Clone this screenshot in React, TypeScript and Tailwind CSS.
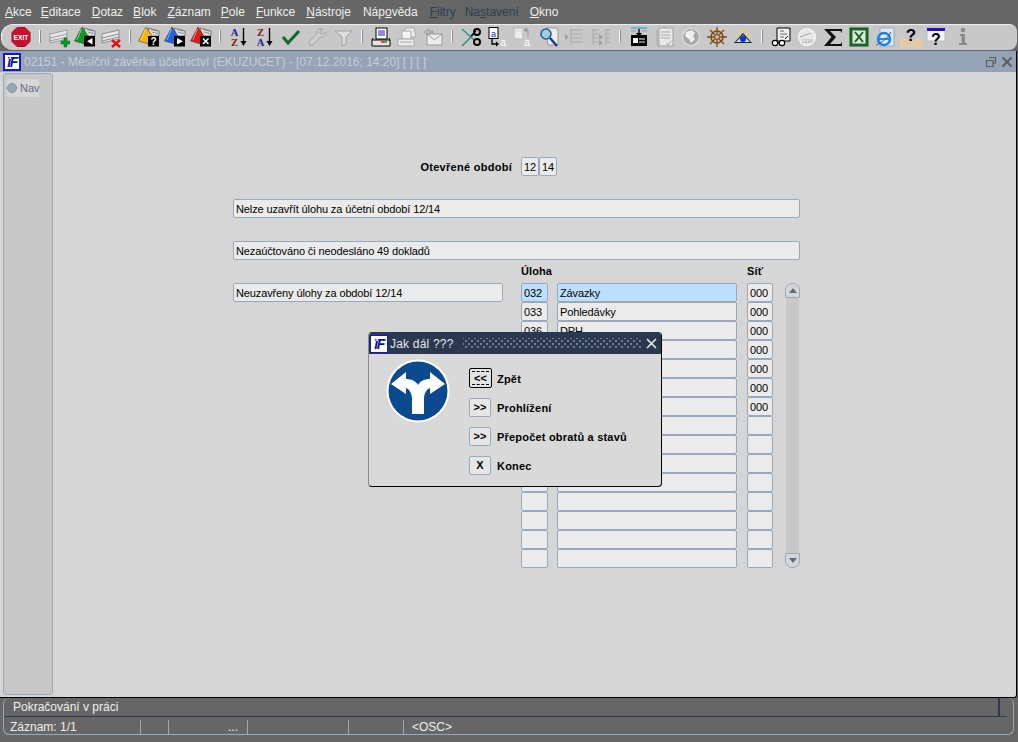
import React from "react";

const S = ({ children }: { children: React.ReactNode }) => (
  <svg width="22" height="22" viewBox="0 0 22 22" shapeRendering="geometricPrecision">{children}</svg>
);
const Stripes = ({ x = 2, y = 4, c = "#9a9a9a" }: { x?: number; y?: number; c?: string }) => (
  <g>
    <path d={`M${x} ${y + 4}L${x + 17} ${y}V${y + 9}L${x} ${y + 13}Z`} fill="#e8e8e8" stroke={c} />
    <path d={`M${x} ${y + 8}L${x + 17} ${y + 4}`} stroke={c} />
    <path d={`M${x} ${y + 11}L${x + 17} ${y + 7}`} stroke={c} />
  </g>
);
const Tag = ({ color, box }: { color: string; box: React.ReactNode }) => (
  <S>
    <path d="M10 2L21 5V10H12Z" fill="#dcdcdc" stroke="#555" strokeWidth="0.7" />
    <path d="M13 3.5L19 5M13.5 6L20 7.5" stroke="#777" strokeWidth="0.7" />
    <path d="M8 1L14 10V19L0.5 15Z" fill={color} stroke="#333" strokeWidth="0.5" />
    <path d="M7.5 3L3 14" stroke="#fff" strokeOpacity="0.5" />
    <rect x="10" y="10" width="11" height="10.5" fill="#000" />
    {box}
  </S>
);
const grey = "#a8a8a8";

const icons: React.ReactNode[] = [
  <S key="exit">
    <path d="M7 1.5H15L20 6.5V15.500L15 20.500H7L2 15.500V6.500Z" fill="#c8102e" stroke="#a00c22" />
    <text x="11" y="13.600" fontSize="7.200" fontWeight="700" fill="#fff" textAnchor="middle" fontFamily="Liberation Sans" textLength="15" lengthAdjust="spacingAndGlyphs">EXIT</text>
  </S>,
  "|",
  <S key="add">
    <Stripes />
    <path d="M13 15H16V12H19V15H22V18H19V21H16V18H13Z" fill="#0a9a1e" stroke="#064" strokeWidth="0.5" />
  </S>,
  <Tag key="g" color="#0a9a28" box={<path d="M18.500 12V18.500L13 15.200Z" fill="#fff" />} />,
  <S key="del">
    <Stripes c="#8a8a8a" />
    <path d="M12 14L20 21M20 14L12 21" stroke="#e01010" strokeWidth="2.4" />
  </S>,
  "|",
  <Tag key="y" color="#f5b400" box={<text x="15.500" y="19" fontSize="10" fontWeight="700" fill="#fff" textAnchor="middle" fontFamily="Liberation Sans">?</text>} />,
  <Tag key="b" color="#1a66e0" box={<path d="M13 12L19 15.200L13 18.500Z" fill="#fff" />} />,
  <Tag key="r" color="#e01818" box={<path d="M13 12.500L18.500 18M18.500 12.500L13 18" stroke="#fff" strokeWidth="1.6" />} />,
  "|",
  <S key="az">
    <text x="6.500" y="10" fontSize="10.500" fontWeight="700" fill="#1a1a8c" textAnchor="middle" fontFamily="Liberation Serif">A</text>
    <text x="6.500" y="20" fontSize="10.500" fontWeight="700" fill="#7a1a1a" textAnchor="middle" fontFamily="Liberation Serif">Z</text>
    <path d="M15.500 2V17" stroke="#000" strokeWidth="1.400" />
    <path d="M12.500 15H18.500L15.500 20Z" fill="#000" />
  </S>,
  <S key="za">
    <text x="6.500" y="10" fontSize="10.500" fontWeight="700" fill="#7a1a1a" textAnchor="middle" fontFamily="Liberation Serif">Z</text>
    <text x="6.500" y="20" fontSize="10.500" fontWeight="700" fill="#1a1a8c" textAnchor="middle" fontFamily="Liberation Serif">A</text>
    <path d="M15.500 2V17" stroke="#000" strokeWidth="1.400" />
    <path d="M12.500 15H18.500L15.500 20Z" fill="#000" />
  </S>,
  <S key="check">
    <path d="M3 11L8 17L19 5" fill="none" stroke="#0a6b2a" strokeWidth="3" />
  </S>,
  <S key="wrench">
    <path d="M14 3C12 3 10.500 5 11 7.500L3 15.500L3.500 19L7 19L14.500 11C17 12 20 10 20 7.500L19.500 6L16.500 8.500L14 7.500L13.800 5.500L16.500 3.300Z" fill="#cfcfcf" stroke="#a0a0a0" />
  </S>,
  <S key="funnel">
    <path d="M3 5H20L14 11V18L10 20V11Z" fill="#dedede" stroke="#a0a0a0" />
  </S>,
  "|",
  <S key="print">
    <rect x="6" y="2" width="11" height="11" fill="#fff" stroke="#000" />
    <path d="M8 5H15M8 7H15M8 9H15" stroke="#2020c0" />
    <path d="M2 14H20V20H2Z" fill="#e6e6e6" stroke="#000" />
    <path d="M11 16H14" stroke="#e02020" strokeWidth="1.600" />
    <path d="M14 16H17" stroke="#10a030" strokeWidth="1.600" />
    <path d="M3 12L2 14M19 12L20 14" stroke="#000" />
  </S>,
  <S key="print2">
    <path d="M9 2H18L20 11H9Z" fill="#ececec" stroke={grey} />
    <path d="M6 5H15V13H6Z" fill="#f4f4f4" stroke={grey} />
    <path d="M2 13H18V20H2Z" fill="#ececec" stroke={grey} />
    <path d="M4 16H16" stroke={grey} />
  </S>,
  <S key="mail">
    <path d="M5 8H20V19H5Z" fill="#ececec" stroke="#999" />
    <path d="M5 8L12.500 14L20 8" fill="none" stroke="#999" />
    <path d="M2 6L7 3V5H11V7H7V9Z" fill="#bbb" stroke="#888" strokeWidth="0.600" />
  </S>,
  "|",
  <S key="cut">
    <path d="M2 3L14 14M2 20L14 8" stroke="#3b8f8f" strokeWidth="1.600" />
    <path d="M11 10L16 5" stroke="#000" strokeWidth="1.400" />
    <circle cx="17" cy="6" r="3" fill="none" stroke="#000" strokeWidth="2" />
    <circle cx="17" cy="16" r="3" fill="none" stroke="#000" strokeWidth="2" />
  </S>,
  <S key="copy">
    <rect x="3" y="1.500" width="9" height="11" fill="#fff" stroke="#000" />
    <text x="7.500" y="10.500" fontSize="9" fill="#1a1ad0" textAnchor="middle" fontFamily="Liberation Sans">a</text>
    <path d="M6 13V18H11" fill="none" stroke="#000" strokeWidth="1.300" />
    <path d="M10 15.500L13 18L10 20.500Z" fill="#000" />
    <text x="17" y="20" fontSize="10" fill="#fff" textAnchor="middle" fontFamily="Liberation Sans">a</text>
  </S>,
  <S key="paste">
    <rect x="2" y="2" width="9" height="11" fill="#e4e4e4" stroke="#bbb" />
    <text x="6.500" y="10.500" fontSize="9" fill="#fff" textAnchor="middle" fontFamily="Liberation Sans">a</text>
    <path d="M16 4V11M12 4L15 2V6Z" stroke="#999" fill="#999" />
    <text x="15" y="20" fontSize="10" fill="#fff" textAnchor="middle" fontFamily="Liberation Sans">a</text>
  </S>,
  <S key="search">
    <path d="M8 2H18L20 4V19H10Z" fill="#eee" stroke="#999" />
    <circle cx="8" cy="8" r="5" fill="#9fd0e0" stroke="#2a5aa0" strokeWidth="1.600" />
    <path d="M12 12L19 20" stroke="#1a3a90" strokeWidth="2.600" />
  </S>,
  <S key="ind">
    <path d="M1 8L5 11L1 14Z" fill="#a0a0a0" />
    <path d="M7 3V19M7 4H19M7 8H19M7 12H19M7 16H19" stroke="#a8a8a8" />
  </S>,
  <S key="cols">
    <path d="M3 3V19M16 3V19M3 4H8M3 8H8M3 12H8M3 16H8M16 4H20M16 8H20M16 12H20M16 16H20" stroke="#a8a8a8" />
    <path d="M9 8L13 11L9 14Z" fill="#a0a0a0" />
    <path d="M9 14L13 17L9 20Z" fill="#a0a0a0" />
  </S>,
  "|",
  <S key="doc">
    <rect x="3" y="9" width="16" height="11" fill="#000" />
    <rect x="5" y="12" width="5" height="5" fill="#fff" />
    <path d="M11 13H17M11 16H17" stroke="#fff" />
    <path d="M3 2H19" stroke="#35b0e0" strokeWidth="1.400" />
    <path d="M3 5H8M14 5H19" stroke="#999" />
    <path d="M11 3V9" stroke="#000" strokeWidth="1.400" />
    <path d="M8 7H14L11 11Z" fill="#000" />
  </S>,
  <S key="doc2">
    <path d="M5 2H19V20H5Z" fill="#e8e8e8" stroke="#a0a0a0" />
    <path d="M3 4V20H5M7 6H16M7 9H16M7 12H16M12 17L14 19L17 15" fill="none" stroke="#a8a8a8" />
  </S>,
  <S key="globe">
    <circle cx="11" cy="11" r="8.500" fill="#a8a8a8" stroke="#e0e0e0" strokeWidth="1.200" />
    <path d="M6 6L12 4L15 7L13 10L15 13L11 17L9 13L5 10Z" fill="#efefef" />
  </S>,
  <S key="wheel">
    <circle cx="11" cy="11" r="6" fill="none" stroke="#7a4a10" strokeWidth="1.600" />
    <path d="M1 11H21M11 1V21M4 4L18 18M18 4L4 18" stroke="#7a4a10" strokeWidth="1.300" />
    <circle cx="11" cy="11" r="2.300" fill="#c8c8c8" stroke="#7a4a10" />
  </S>,
  <S key="eye">
    <path d="M2 17L11 7L20 17Z" fill="#222" />
    <path d="M4 16L11 9L18 16Z" fill="#cfe0f0" />
    <circle cx="11" cy="13" r="3" fill="#1030e0" />
    <path d="M3 9L5 11M11 3V6M19 9L17 11M6 5L7.500 7.500M16 5L14.500 7.500" stroke="#f0e020" strokeWidth="1.200" />
  </S>,
  "|",
  <S key="glasses">
    <path d="M7 2H20V15H7Z" fill="#f2f2f2" stroke="#000" />
    <path d="M10 5H14M10 8H17M10 11H14" stroke="#666" />
    <path d="M15 13L18 10" stroke="#000" />
    <circle cx="5" cy="17" r="2.700" fill="#fff" stroke="#000" strokeWidth="1.200" />
    <circle cx="12" cy="17" r="2.700" fill="#fff" stroke="#000" strokeWidth="1.200" />
    <path d="M7.700 17H9.300" stroke="#000" />
  </S>,
  <S key="clock">
    <circle cx="11" cy="11" r="8.500" fill="#e8e8e8" stroke="#f4f4f4" strokeWidth="1.200" />
    <path d="M4 11L15 7" stroke="#aaa" strokeWidth="1.200" />
    <text x="11" y="17" fontSize="5" fill="#999" textAnchor="middle" fontFamily="Liberation Sans">1314</text>
  </S>,
  <S key="sigma">
    <path d="M2 3H20V7L18.500 5H8L14 11L8 18H18.500L20 16V20H2L9.500 11Z" fill="#111" />
  </S>,
  <S key="xls">
    <rect x="2" y="2" width="18" height="18" fill="#1a6a2a" stroke="#0d5a1a" />
    <rect x="4.500" y="4.500" width="13" height="13" fill="#dfe8dc" />
    <path d="M7 6L15 16M15 6L7 16" stroke="#0d6a1f" strokeWidth="2" />
  </S>,
  <S key="ie">
    <path d="M6 2H20V20H6Z" fill="#e2e8f4" stroke="#9aa8c8" />
    <circle cx="10" cy="13" r="6" fill="none" stroke="#1a80e0" strokeWidth="2.400" />
    <path d="M5 13H15" stroke="#1a80e0" strokeWidth="1.800" />
    <path d="M2 19C6 18 14 12 17 6" fill="none" stroke="#1a60c0" />
  </S>,
  <S key="help">
    <rect x="1" y="13" width="5" height="8" fill="#f0c48c" stroke="#e8d8c0" strokeWidth="0.500" />
    <rect x="8.500" y="15" width="5" height="6" fill="#f0c48c" stroke="#e8d8c0" strokeWidth="0.500" />
    <rect x="16" y="13" width="5" height="8" fill="#f0c48c" stroke="#e8d8c0" strokeWidth="0.500" />
    <text x="11" y="15" fontSize="17" fontWeight="700" fill="#000" textAnchor="middle" fontFamily="Liberation Sans">?</text>
  </S>,
  <S key="q">
    <rect x="1" y="2" width="18" height="13" fill="#f4f4f4" stroke="#bbb" />
    <rect x="1" y="2" width="18" height="3" fill="#2a10c0" />
    <text x="10" y="19" fontSize="16" fontWeight="700" fill="#000" textAnchor="middle" fontFamily="Liberation Sans">?</text>
  </S>,
  <S key="i">
    <circle cx="11" cy="4" r="2.300" fill="#8a8a8a" />
    <path d="M8 8H13V17H15V19H7V17H9.500V10H8Z" fill="#8a8a8a" />
  </S>,
];

const Mn = ({ t, u, cls = "" }: { t: string; u: number; cls?: string }) => (
  <span className={cls}>
    {t.slice(0, u)}
    <span className="underline underline-offset-1">{t[u]}</span>
    {t.slice(u + 1)}
  </span>
);

const IF = ({ size }: { size: "a" | "b" }) => (
  <div
    className={
      size === "a"
        ? "w-[18px] h-[18px] bg-white border-2 border-[#1616c8] flex items-center justify-center shrink-0"
        : "w-[18px] h-[18px] bg-white border border-[#1616c8] flex items-center justify-center shrink-0"
    }
  >
    <span className="text-[14px] leading-none font-bold italic text-[#12129a] tracking-[-1.5px] [font-family:'Liberation_Sans',sans-serif]">ïF</span>
  </div>
);

const fieldCls =
  "h-[19px] bg-[#ebebeb] border border-[#9aa8bc] rounded-[2px] text-[11px] leading-[19px] text-black px-[2px] overflow-hidden whitespace-nowrap tracking-[-0.12px]";

const rows: [string, string, string][] = [
  ["032", "Závazky", "000"],
  ["033", "Pohledávky", "000"],
  ["036", "DPH", "000"],
  ["", "", "000"],
  ["", "", "000"],
  ["", "", "000"],
  ["", "", "000"],
  ["", "", ""],
  ["", "", ""],
  ["", "", ""],
  ["", "", ""],
  ["", "", ""],
  ["", "", ""],
  ["", "", ""],
  ["", "", ""],
];

const DlgBtn = ({ t, label, focus }: { t: string; label: string; focus?: boolean }) => (
  <div className="flex items-end h-[20px]">
    {focus ? (
      <div className="w-[23px] h-[20px] border border-black rounded-[2px] bg-[#e4e4e4] flex items-center justify-center">
        <span className="border-y border-dashed border-black px-[2px] text-[11px] leading-[12px] font-bold text-black">{t}</span>
      </div>
    ) : (
      <div className="w-[22px] h-[19px] border border-[#9aa8bc] rounded-[2px] bg-[#e6e6e6] flex items-center justify-center text-[11px] font-bold text-black">
        {t}
      </div>
    )}
    <span className={focus ? "ml-[5px] self-center mt-[2px] text-[11px] font-bold text-black tracking-[0.2px]" : "ml-[6px] self-center mt-[2px] text-[11px] font-bold text-black tracking-[0.2px]"}>{label}</span>
  </div>
);

export default function App() {
  return (
    <div className="relative w-[1018px] h-[742px] bg-[#666666] overflow-hidden flex flex-col [font-family:'Liberation_Sans',Arial,sans-serif] text-[12px]">
      {/* menu */}
      <div className="h-[24px] flex items-center pl-[5px] gap-[11px] text-[#f0f0f0] shrink-0">
        <Mn t="Akce" u={0} cls="mr-[-2px]" />
        <Mn t="Editace" u={0} />
        <Mn t="Dotaz" u={0} cls="mr-[-1px]" />
        <Mn t="Blok" u={0} />
        <Mn t="Záznam" u={0} cls="mr-[-1px]" />
        <Mn t="Pole" u={0} />
        <Mn t="Funkce" u={0} />
        <Mn t="Nástroje" u={0} cls="mr-[1px]" />
        <Mn t="Nápověda" u={3} cls="mr-[1px]" />
        <Mn t="Filtry" u={0} cls="mr-[-2px] text-[#2f3d52]" />
        <Mn t="Nastavení" u={2} cls="text-[#2f3d52]" />
        <Mn t="Okno" u={0} />
      </div>
      {/* toolbar */}
      <div className="h-[26px] ml-[1px] mr-[1px] pl-[6px] pb-[2px] bg-[#c8c8c8] border-t border-l border-[#eeeeee] rounded-l-[12px] rounded-r-[8px] flex items-center shrink-0">
        {icons.map((ic, i) =>
          ic === "|" ? (
            <div key={i} className="w-[12px] flex justify-center">
              <div className="w-[2px] h-[13px] bg-[#8090a8] border-l border-white" />
            </div>
          ) : (
            <div key={i} className="w-[26px] flex justify-center">
              {ic}
            </div>
          )
        )}
      </div>
      {/* window */}
      <div className="mt-[1px] w-[1017px] h-[647px] flex flex-col bg-[#d6d6d6] border-r border-b border-black rounded-br-[3px] shrink-0">
        <div className="h-[21px] bg-[#95a3b6] flex items-center pl-[3px] shrink-0">
          <IF size="a" />
          <span className="ml-[3px] text-[#c7cdd6] text-[12px]">02151 - Měsíční závěrka účetnictví (EKUZUCET) - [07.12.2016; 14:20] [ ] [ ]</span>
          <div className="ml-auto mr-[3px] flex items-center gap-[4px]">
            <svg width="12" height="12" viewBox="0 0 12 12">
              <path d="M4 1.500H10.500V7H8M1.500 4.500H8V10.500H1.500Z" fill="none" stroke="#5c5c5c" strokeWidth="1.200" />
            </svg>
            <svg width="12" height="12" viewBox="0 0 12 12">
              <path d="M1.500 1.500L10.500 10.500M10.500 1.500L1.500 10.500" stroke="#5c5c5c" strokeWidth="2" />
            </svg>
          </div>
        </div>
        <div className="flex-1 flex min-h-0">
          {/* nav */}
          <div className="w-[50px] ml-[3px] mb-[2px] mt-[1px] bg-[#c8c8c8] border border-[#9aa8bc] rounded-[3px] pt-[5px] pl-[3px] shrink-0">
            <div className="w-[32px] h-[18px] bg-[#d6d6d6] flex items-center gap-[3px]">
              <span className="w-[10px] h-[10px] rounded-full border border-[#7f8ea3] bg-[#9aa8bc] shrink-0" />
              <span className="text-[11px] text-[#5d6b80]">Nav</span>
            </div>
          </div>
          {/* form */}
          <div className="pl-[180px] pt-[85px] w-[747px] flex flex-col text-black">
            <div className="flex h-[19px] items-center justify-end pr-[243px]">
              <span className="text-[11px] font-bold mr-[9px] mt-[2px] tracking-[0.28px]">Otevřené období</span>
              <div className="w-[18px] h-[19px] bg-[#ebebeb] border border-[#9aa8bc] rounded-[2px] text-[11px] leading-[19px] text-center">12</div>
              <div className="w-[18px] h-[19px] bg-[#ebebeb] border border-[#9aa8bc] rounded-[2px] text-[11px] leading-[19px] text-center">14</div>
            </div>
            <div className={fieldCls + " mt-[23px]"}>Nelze uzavřít úlohu za účetní období 12/14</div>
            <div className={fieldCls + " mt-[23px]"}>Nezaúčtováno či neodesláno 49 dokladů</div>
            <div className="flex h-[23px] items-center text-[11px] font-bold">
              <span className="ml-[288px] w-[226px] tracking-[0.1px]">Úloha</span>
              <span className="tracking-[0.2px]">Síť</span>
            </div>
            <div className="flex items-start">
              <div className={fieldCls + " w-[270px]"}>Neuzavřeny úlohy za období 12/14</div>
              <div className="ml-[18px] flex flex-col w-[27px]">
                {rows.map((r, i) => (
                  <div key={i} className={i === 0 ? fieldCls + " !bg-[#bfdfff]" : fieldCls}>{r[0]}</div>
                ))}
              </div>
              <div className="ml-[9px] flex flex-col w-[180px]">
                {rows.map((r, i) => (
                  <div key={i} className={i === 0 ? fieldCls + " !bg-[#bfdfff]" : fieldCls}>{r[1]}</div>
                ))}
              </div>
              <div className="ml-[10px] flex flex-col w-[26px]">
                {rows.map((r, i) => (
                  <div key={i} className={fieldCls}>{r[2]}</div>
                ))}
              </div>
              <div className="ml-[12px] w-[15px] h-[285px] flex flex-col items-center">
                <div className="w-[15px] h-[15px] border border-[#9aa8bc] rounded-t-[7px] bg-[#d6d6d6] flex items-center justify-center shrink-0">
                  <svg width="8" height="5" viewBox="0 0 8 5"><path d="M0 5L4 0L8 5Z" fill="#5a6a8a" /></svg>
                </div>
                <div className="w-[13px] flex-1 bg-[#c8c8c8]" />
                <div className="w-[15px] h-[15px] border border-[#9aa8bc] rounded-b-[7px] bg-[#d6d6d6] flex items-center justify-center shrink-0">
                  <svg width="8" height="5" viewBox="0 0 8 5"><path d="M0 0L8 0L4 5Z" fill="#5a6a8a" /></svg>
                </div>
              </div>
            </div>
          </div>
        </div>
      </div>
      {/* status */}
      <div className="flex-1 relative">
        <div className="mx-[3px] h-[37px] w-[1011px] border-l border-r border-b border-[#9aa8bc] rounded-[6px] text-[#f0f0f0] flex flex-col">
          <div className="h-[19px] flex items-center pl-[9px] border-b border-[#2f3b4c] mr-[6px]">
            <span>Pokračování v práci</span>
            <div className="ml-auto mr-[7px] w-[2px] h-[18px] bg-[#2f3b4c]" />
          </div>
          <div className="flex-1 flex items-center pl-[6px] pt-[1px]">
            <span className="w-[131px] border-r border-[#9aa8bc] h-[15px] leading-[15px] shrink-0">Záznam: 1/1</span>
            <span className="w-[28px] border-r border-[#9aa8bc] h-[15px] shrink-0" />
            <span className="w-[79px] border-r border-[#9aa8bc] h-[15px] leading-[15px] text-right pr-[9px] shrink-0">...</span>
            <span className="w-[101px] border-r border-[#9aa8bc] h-[15px] shrink-0" />
            <span className="w-[55px] border-r border-[#9aa8bc] h-[15px] shrink-0" />
            <span className="pl-[8px]">&lt;OSC&gt;</span>
          </div>
        </div>
      </div>
      {/* dialog */}
      <div className="absolute left-[368px] top-[332px] w-[294px] h-[155px] bg-[#d9d9d9] border border-black border-l-[#8a8a8a] border-t-[#2a3850] rounded-[4px] overflow-hidden flex flex-col">
        <div className="h-[21px] bg-[#2a3850] flex items-center pl-[1px] shrink-0">
          <IF size="b" />
          <span className="ml-[2px] text-[12px] text-[#e8e8e8] tracking-[0.2px]">Jak dál ???</span>
          <div className="ml-[9px] w-[178px] h-[11px] bg-[radial-gradient(#9aa5b5_0.6px,transparent_0.9px),radial-gradient(#9aa5b5_0.6px,transparent_0.9px)] bg-[length:6px_6px] bg-[position:0_0,3px_3px]" />
          <svg className="ml-[5px]" width="11" height="11" viewBox="0 0 11 11">
            <path d="M1 1L10 10M10 1L1 10" stroke="#f0f0f0" strokeWidth="1.500" />
          </svg>
        </div>
        <div className="flex pl-[17px] pt-[5px]">
          <svg width="64" height="64" viewBox="-32 -32 64 64" className="shrink-0">
            <circle r="31.500" fill="#fff" />
            <circle r="29.500" fill="#0b4a8e" />
            <path d="M-6 23L-6 8C-6 2-9-2-12-3L-12 3L-27-7L-12-19L-12-12C-7-12-2-10 0-6C2-10 7-12 12-12L12-19L27-7L12 3L12-3C9-2 6 2 6 8L6 23Z" fill="#fff" />
          </svg>
          <div className="ml-[19px] mt-[9px] flex flex-col gap-[9px]">
            <DlgBtn t="<<" label="Zpět" focus />
            <DlgBtn t=">>" label="Prohlížení" />
            <DlgBtn t=">>" label="Přepočet obratů a stavů" />
            <DlgBtn t="X" label="Konec" />
          </div>
        </div>
      </div>
    </div>
  );
}
